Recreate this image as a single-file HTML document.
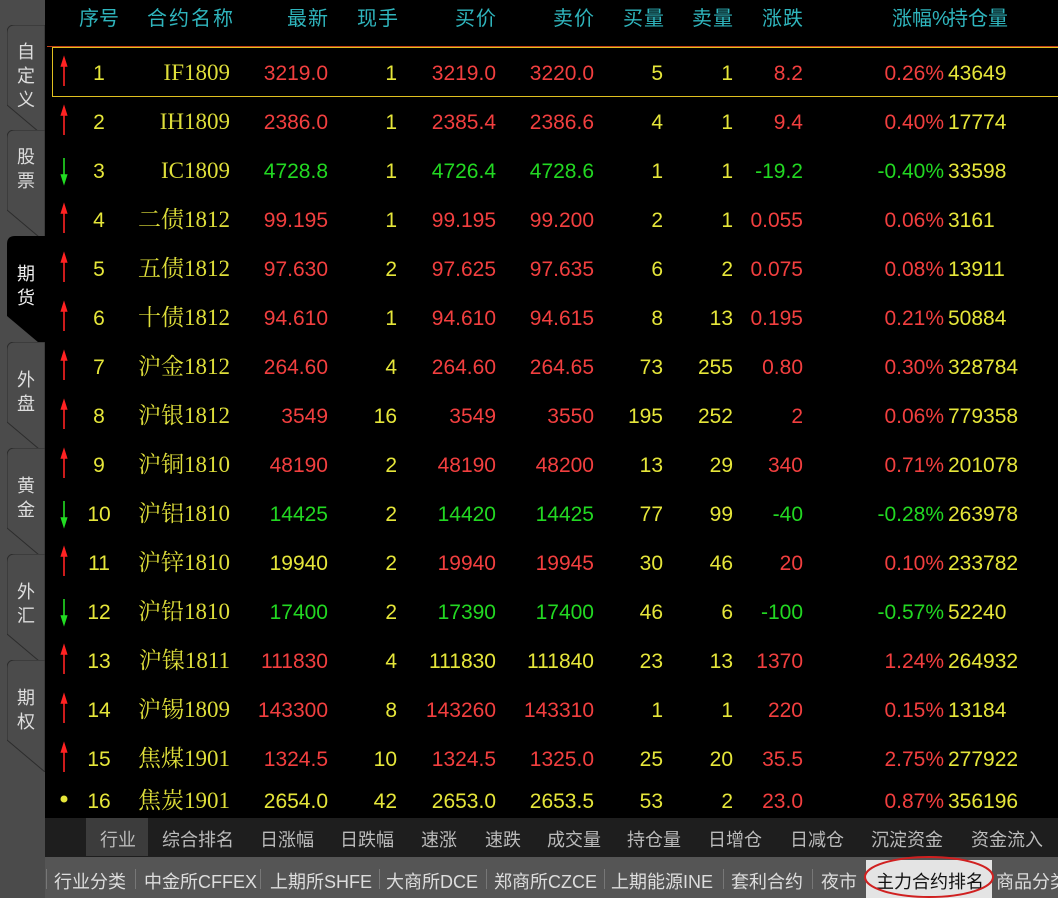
<!DOCTYPE html>
<html><head><meta charset="utf-8"><style>
*{margin:0;padding:0;box-sizing:border-box}
body{width:1058px;height:898px;overflow:hidden;background:#000;font-family:"Liberation Sans","Noto Sans CJK SC",sans-serif;position:relative}
.side{position:absolute;left:0;top:0;width:45px;height:898px;background:#4b4b4b}
.tab{position:absolute;left:7px;width:38px;height:110px}
.tab svg{position:absolute;left:0;top:0}
.tab span{position:absolute;left:9px;top:15px;width:20px;font-size:18px;line-height:24px;color:#ddd;text-align:center}
.main{position:absolute;left:45px;top:0;width:1013px;height:818px;background:#000}
.hd{position:absolute;top:2px;font-size:20px;color:#2fb5bd;white-space:nowrap}
.r{position:absolute;height:49px;left:0;width:1058px}
.r span{position:absolute;top:14px;font-size:21px;line-height:26px;height:26px;white-space:nowrap}
.n{left:81px;width:36px;text-align:center}
.r span.nm{right:828px;font-family:"Liberation Serif","Noto Serif CJK SC",serif;color:#dede3a;font-size:23px;line-height:26px;top:13px}
.c1{right:730px}.c2{right:661px}.c3{right:562px}.c4{right:464px}.c5{right:395px}.c6{right:325px}.c7{right:255px}.c8{right:114px}.c9{left:948px}
.y{color:#e6e63a}.rd{color:#f23f3f}.g{color:#22d822}
.bar{position:absolute;left:45px;top:818px;width:1013px;height:39px;background:#1e1e1e}
.bar span{position:absolute;top:8px;font-size:18px;color:#bbb}
.bot{position:absolute;left:45px;top:857px;width:1013px;height:41px;background:#555}
.bot span{position:absolute;top:11px;font-size:18px;color:#ddd;white-space:nowrap}
.sep{position:absolute;top:12px;width:1px;height:20px;background:#777}
</style></head><body>
<div class="side">
<div class="tab" style="top:25px"><svg width="38" height="112"><path d="M0 8 Q0 0 8 0 H38 V112 L0 80 Z" fill="#4b4b4b" stroke="#2c2c2c"/></svg><span>自定义</span></div>
<div class="tab" style="top:130px"><svg width="38" height="112"><path d="M0 8 Q0 0 8 0 H38 V112 L0 80 Z" fill="#4b4b4b" stroke="#2c2c2c"/></svg><span>股票</span></div>
<div class="tab" style="top:236px"><svg width="38" height="112"><path d="M0 8 Q0 0 8 0 H38 V112 L0 80 Z" fill="#000"/></svg><span style="top:26px;color:#eee">期货</span></div>
<div class="tab" style="top:342px"><svg width="38" height="112"><path d="M0 8 Q0 0 8 0 H38 V112 L0 80 Z" fill="#4b4b4b" stroke="#2c2c2c"/></svg><span style="top:26px">外盘</span></div>
<div class="tab" style="top:448px"><svg width="38" height="112"><path d="M0 8 Q0 0 8 0 H38 V112 L0 80 Z" fill="#4b4b4b" stroke="#2c2c2c"/></svg><span style="top:26px">黄金</span></div>
<div class="tab" style="top:554px"><svg width="38" height="112"><path d="M0 8 Q0 0 8 0 H38 V112 L0 80 Z" fill="#4b4b4b" stroke="#2c2c2c"/></svg><span style="top:26px">外汇</span></div>
<div class="tab" style="top:660px"><svg width="38" height="112"><path d="M0 8 Q0 0 8 0 H38 V112 L0 80 Z" fill="#4b4b4b" stroke="#2c2c2c"/></svg><span style="top:26px">期权</span></div>
</div>
<div class="main"></div>
<div class="hd" style="left:79px">序号</div>
<div class="hd" style="left:147px;letter-spacing:2px">合约名称</div>
<div class="hd" style="left:287px;letter-spacing:1px">最新</div>
<div class="hd" style="left:357px;letter-spacing:1px">现手</div>
<div class="hd" style="left:455px;letter-spacing:1px">买价</div>
<div class="hd" style="left:553px;letter-spacing:1px">卖价</div>
<div class="hd" style="left:623px;letter-spacing:1px">买量</div>
<div class="hd" style="left:692px;letter-spacing:1px">卖量</div>
<div class="hd" style="left:762px;letter-spacing:1px">涨跌</div>
<div class="hd" style="left:892px">涨幅%</div>
<div class="hd" style="left:948px">持仓量</div>
<div style="position:absolute;left:47px;top:46px;width:1011px;height:1px;background:#c0401a"></div>
<div style="position:absolute;left:52px;top:47px;width:1010px;height:50px;border:1px solid #e0c020"></div>
<svg style="position:absolute;left:55px;top:0" width="18" height="820">
<g stroke-width="1.6">
<g stroke="#f22" fill="#f22"><path d="M9 64V86"/><path d="M6.5 66L9 58L11.5 66Z"/></g>
<g stroke="#f22" fill="#f22"><path d="M9 113V135"/><path d="M6.5 115L9 107L11.5 115Z"/></g>
<g stroke="#2d2" fill="#2d2"><path d="M9 158V176"/><path d="M6.5 175L9 183L11.5 175Z"/></g>
<g stroke="#f22" fill="#f22"><path d="M9 211V233"/><path d="M6.5 213L9 205L11.5 213Z"/></g>
<g stroke="#f22" fill="#f22"><path d="M9 260V282"/><path d="M6.5 262L9 254L11.5 262Z"/></g>
<g stroke="#f22" fill="#f22"><path d="M9 309V331"/><path d="M6.5 311L9 303L11.5 311Z"/></g>
<g stroke="#f22" fill="#f22"><path d="M9 358V380"/><path d="M6.5 360L9 352L11.5 360Z"/></g>
<g stroke="#f22" fill="#f22"><path d="M9 407V429"/><path d="M6.5 409L9 401L11.5 409Z"/></g>
<g stroke="#f22" fill="#f22"><path d="M9 456V478"/><path d="M6.5 458L9 450L11.5 458Z"/></g>
<g stroke="#2d2" fill="#2d2"><path d="M9 501V519"/><path d="M6.5 518L9 526L11.5 518Z"/></g>
<g stroke="#f22" fill="#f22"><path d="M9 554V576"/><path d="M6.5 556L9 548L11.5 556Z"/></g>
<g stroke="#2d2" fill="#2d2"><path d="M9 599V617"/><path d="M6.5 616L9 624L11.5 616Z"/></g>
<g stroke="#f22" fill="#f22"><path d="M9 652V674"/><path d="M6.5 654L9 646L11.5 654Z"/></g>
<g stroke="#f22" fill="#f22"><path d="M9 701V723"/><path d="M6.5 703L9 695L11.5 703Z"/></g>
<g stroke="#f22" fill="#f22"><path d="M9 750V772"/><path d="M6.5 752L9 744L11.5 752Z"/></g>
</g>
<circle cx="9" cy="799" r="3.5" fill="#e6e63a"/>
</svg>

<div class="r" style="top:47px"><span class="n y">1</span><span class="nm">IF1809</span><span class="c1 rd">3219.0</span><span class="c2 y">1</span><span class="c3 rd">3219.0</span><span class="c4 rd">3220.0</span><span class="c5 y">5</span><span class="c6 y">1</span><span class="c7 rd">8.2</span><span class="c8 rd">0.26%</span><span class="c9 y">43649</span></div>
<div class="r" style="top:96px"><span class="n y">2</span><span class="nm">IH1809</span><span class="c1 rd">2386.0</span><span class="c2 y">1</span><span class="c3 rd">2385.4</span><span class="c4 rd">2386.6</span><span class="c5 y">4</span><span class="c6 y">1</span><span class="c7 rd">9.4</span><span class="c8 rd">0.40%</span><span class="c9 y">17774</span></div>
<div class="r" style="top:145px"><span class="n y">3</span><span class="nm">IC1809</span><span class="c1 g">4728.8</span><span class="c2 y">1</span><span class="c3 g">4726.4</span><span class="c4 g">4728.6</span><span class="c5 y">1</span><span class="c6 y">1</span><span class="c7 g">-19.2</span><span class="c8 g">-0.40%</span><span class="c9 y">33598</span></div>
<div class="r" style="top:194px"><span class="n y">4</span><span class="nm">二债1812</span><span class="c1 rd">99.195</span><span class="c2 y">1</span><span class="c3 rd">99.195</span><span class="c4 rd">99.200</span><span class="c5 y">2</span><span class="c6 y">1</span><span class="c7 rd">0.055</span><span class="c8 rd">0.06%</span><span class="c9 y">3161</span></div>
<div class="r" style="top:243px"><span class="n y">5</span><span class="nm">五债1812</span><span class="c1 rd">97.630</span><span class="c2 y">2</span><span class="c3 rd">97.625</span><span class="c4 rd">97.635</span><span class="c5 y">6</span><span class="c6 y">2</span><span class="c7 rd">0.075</span><span class="c8 rd">0.08%</span><span class="c9 y">13911</span></div>
<div class="r" style="top:292px"><span class="n y">6</span><span class="nm">十债1812</span><span class="c1 rd">94.610</span><span class="c2 y">1</span><span class="c3 rd">94.610</span><span class="c4 rd">94.615</span><span class="c5 y">8</span><span class="c6 y">13</span><span class="c7 rd">0.195</span><span class="c8 rd">0.21%</span><span class="c9 y">50884</span></div>
<div class="r" style="top:341px"><span class="n y">7</span><span class="nm">沪金1812</span><span class="c1 rd">264.60</span><span class="c2 y">4</span><span class="c3 rd">264.60</span><span class="c4 rd">264.65</span><span class="c5 y">73</span><span class="c6 y">255</span><span class="c7 rd">0.80</span><span class="c8 rd">0.30%</span><span class="c9 y">328784</span></div>
<div class="r" style="top:390px"><span class="n y">8</span><span class="nm">沪银1812</span><span class="c1 rd">3549</span><span class="c2 y">16</span><span class="c3 rd">3549</span><span class="c4 rd">3550</span><span class="c5 y">195</span><span class="c6 y">252</span><span class="c7 rd">2</span><span class="c8 rd">0.06%</span><span class="c9 y">779358</span></div>
<div class="r" style="top:439px"><span class="n y">9</span><span class="nm">沪铜1810</span><span class="c1 rd">48190</span><span class="c2 y">2</span><span class="c3 rd">48190</span><span class="c4 rd">48200</span><span class="c5 y">13</span><span class="c6 y">29</span><span class="c7 rd">340</span><span class="c8 rd">0.71%</span><span class="c9 y">201078</span></div>
<div class="r" style="top:488px"><span class="n y">10</span><span class="nm">沪铝1810</span><span class="c1 g">14425</span><span class="c2 y">2</span><span class="c3 g">14420</span><span class="c4 g">14425</span><span class="c5 y">77</span><span class="c6 y">99</span><span class="c7 g">-40</span><span class="c8 g">-0.28%</span><span class="c9 y">263978</span></div>
<div class="r" style="top:537px"><span class="n y">11</span><span class="nm">沪锌1810</span><span class="c1 y">19940</span><span class="c2 y">2</span><span class="c3 rd">19940</span><span class="c4 rd">19945</span><span class="c5 y">30</span><span class="c6 y">46</span><span class="c7 rd">20</span><span class="c8 rd">0.10%</span><span class="c9 y">233782</span></div>
<div class="r" style="top:586px"><span class="n y">12</span><span class="nm">沪铅1810</span><span class="c1 g">17400</span><span class="c2 y">2</span><span class="c3 g">17390</span><span class="c4 g">17400</span><span class="c5 y">46</span><span class="c6 y">6</span><span class="c7 g">-100</span><span class="c8 g">-0.57%</span><span class="c9 y">52240</span></div>
<div class="r" style="top:635px"><span class="n y">13</span><span class="nm">沪镍1811</span><span class="c1 rd">111830</span><span class="c2 y">4</span><span class="c3 y">111830</span><span class="c4 y">111840</span><span class="c5 y">23</span><span class="c6 y">13</span><span class="c7 rd">1370</span><span class="c8 rd">1.24%</span><span class="c9 y">264932</span></div>
<div class="r" style="top:684px"><span class="n y">14</span><span class="nm">沪锡1809</span><span class="c1 rd">143300</span><span class="c2 y">8</span><span class="c3 rd">143260</span><span class="c4 rd">143310</span><span class="c5 y">1</span><span class="c6 y">1</span><span class="c7 rd">220</span><span class="c8 rd">0.15%</span><span class="c9 y">13184</span></div>
<div class="r" style="top:733px"><span class="n y">15</span><span class="nm">焦煤1901</span><span class="c1 rd">1324.5</span><span class="c2 y">10</span><span class="c3 rd">1324.5</span><span class="c4 rd">1325.0</span><span class="c5 y">25</span><span class="c6 y">20</span><span class="c7 rd">35.5</span><span class="c8 rd">2.75%</span><span class="c9 y">277922</span></div>
<div class="r" style="top:775px"><span class="n y">16</span><span class="nm">焦炭1901</span><span class="c1 y">2654.0</span><span class="c2 y">42</span><span class="c3 y">2653.0</span><span class="c4 y">2653.5</span><span class="c5 y">53</span><span class="c6 y">2</span><span class="c7 rd">23.0</span><span class="c8 rd">0.87%</span><span class="c9 y">356196</span></div>

<div class="bar">
<div style="position:absolute;left:41px;top:0;width:62px;height:38px;background:#3c3c3c"></div>
<span style="left:55px">行业</span><span style="left:117px">综合排名</span><span style="left:215px">日涨幅</span><span style="left:295px">日跌幅</span><span style="left:376px">速涨</span><span style="left:440px">速跌</span><span style="left:502px">成交量</span><span style="left:582px">持仓量</span><span style="left:663px">日增仓</span><span style="left:745px">日减仓</span><span style="left:826px">沉淀资金</span><span style="left:926px">资金流入</span>
</div>
<div class="bot">
<div class="sep" style="left:1px"></div><span style="left:9px">行业分类</span>
<div class="sep" style="left:90px"></div><span style="left:99px">中金所CFFEX</span>
<div class="sep" style="left:215px"></div><span style="left:225px">上期所SHFE</span>
<div class="sep" style="left:334px"></div><span style="left:341px">大商所DCE</span>
<div class="sep" style="left:441px"></div><span style="left:449px">郑商所CZCE</span>
<div class="sep" style="left:559px"></div><span style="left:566px">上期能源INE</span>
<div class="sep" style="left:678px"></div><span style="left:686px">套利合约</span>
<div class="sep" style="left:767px"></div><span style="left:776px">夜市</span>
<div style="position:absolute;left:821px;top:3px;width:126px;height:38px;background:#e4e4e4"></div>
<span style="left:831px;color:#111">主力合约排名</span>
<span style="left:951px">商品分类</span>
</div>
<svg style="position:absolute;left:0;top:0" width="1058" height="898"><ellipse cx="929" cy="877" rx="64" ry="20" fill="none" stroke="#d02020" stroke-width="2"/></svg>
</body></html>
